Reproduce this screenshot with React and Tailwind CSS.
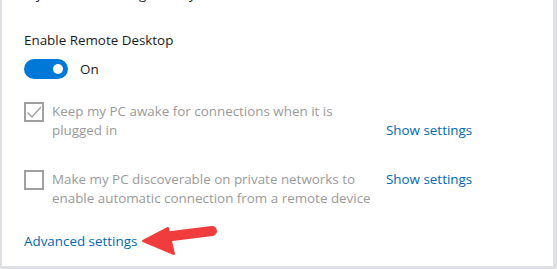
export default function App() {
  return (
    <div className="w-[557px] h-[269px] bg-[#dfe0e6] overflow-hidden" style={{ fontFamily: '"Open Sans", "Noto Sans", sans-serif' }}>
      <div className="relative ml-[2px] w-[551px] h-[266px] bg-white overflow-hidden pl-[22px] text-[13.4px]">
        <p className="-mt-[16px] leading-[20px] text-[#1a1a1a]">If you were working directly on this PC.</p>

        <p className="mt-[26px] leading-[20px] text-[#1a1a1a]">Enable Remote Desktop</p>
        <div className="mt-[9px] flex items-center gap-[12px]">
          <div className="w-[44px] h-[20px] rounded-full bg-[#0078d7] flex items-center justify-end pr-[5px]">
            <div className="w-[10px] h-[10px] rounded-full bg-white" />
          </div>
          <span className="text-[#1a1a1a] leading-[20px]">On</span>
        </div>

        <div className="mt-[23px] flex items-start">
          <div className="w-[20px] h-[20px] border-2 border-[#a0a0a0] flex items-center justify-center shrink-0">
            <svg width="16" height="16" viewBox="0 0 16 16" fill="none">
              <path d="M1.5 8.5 L6 13 L15 3" stroke="#a0a0a0" strokeWidth="1.4" />
            </svg>
          </div>
          <p className="ml-[8px] w-[334px] leading-[19px] text-[#9a9a9a]">
            Keep my PC awake for connections when it is plugged in
          </p>
          <a className="mt-[19px] leading-[19px] text-[#0067b8]">Show settings</a>
        </div>

        <div className="mt-[30px] flex items-start">
          <div className="w-[20px] h-[20px] border-2 border-[#a0a0a0] shrink-0" />
          <p className="ml-[8px] w-[334px] leading-[19px] text-[#9a9a9a]">
            Make my PC discoverable on private networks to enable automatic connection from a remote device
          </p>
          <a className="leading-[19px] text-[#0067b8]">Show settings</a>
        </div>

        <a className="block mt-[23px] leading-[20px] text-[#0067b8]">Advanced settings</a>

        <svg className="absolute left-[136px] top-[221px]" width="82" height="36" viewBox="0 0 82 36">
          <path d="M30 15.5 L74 10" stroke="#f03c3c" strokeWidth="10" strokeLinecap="round" />
          <path d="M5 20 L30 7 L36 33 Z" fill="#f03c3c" stroke="#f03c3c" strokeWidth="2" strokeLinejoin="round" />
        </svg>
      </div>
    </div>
  );
}
